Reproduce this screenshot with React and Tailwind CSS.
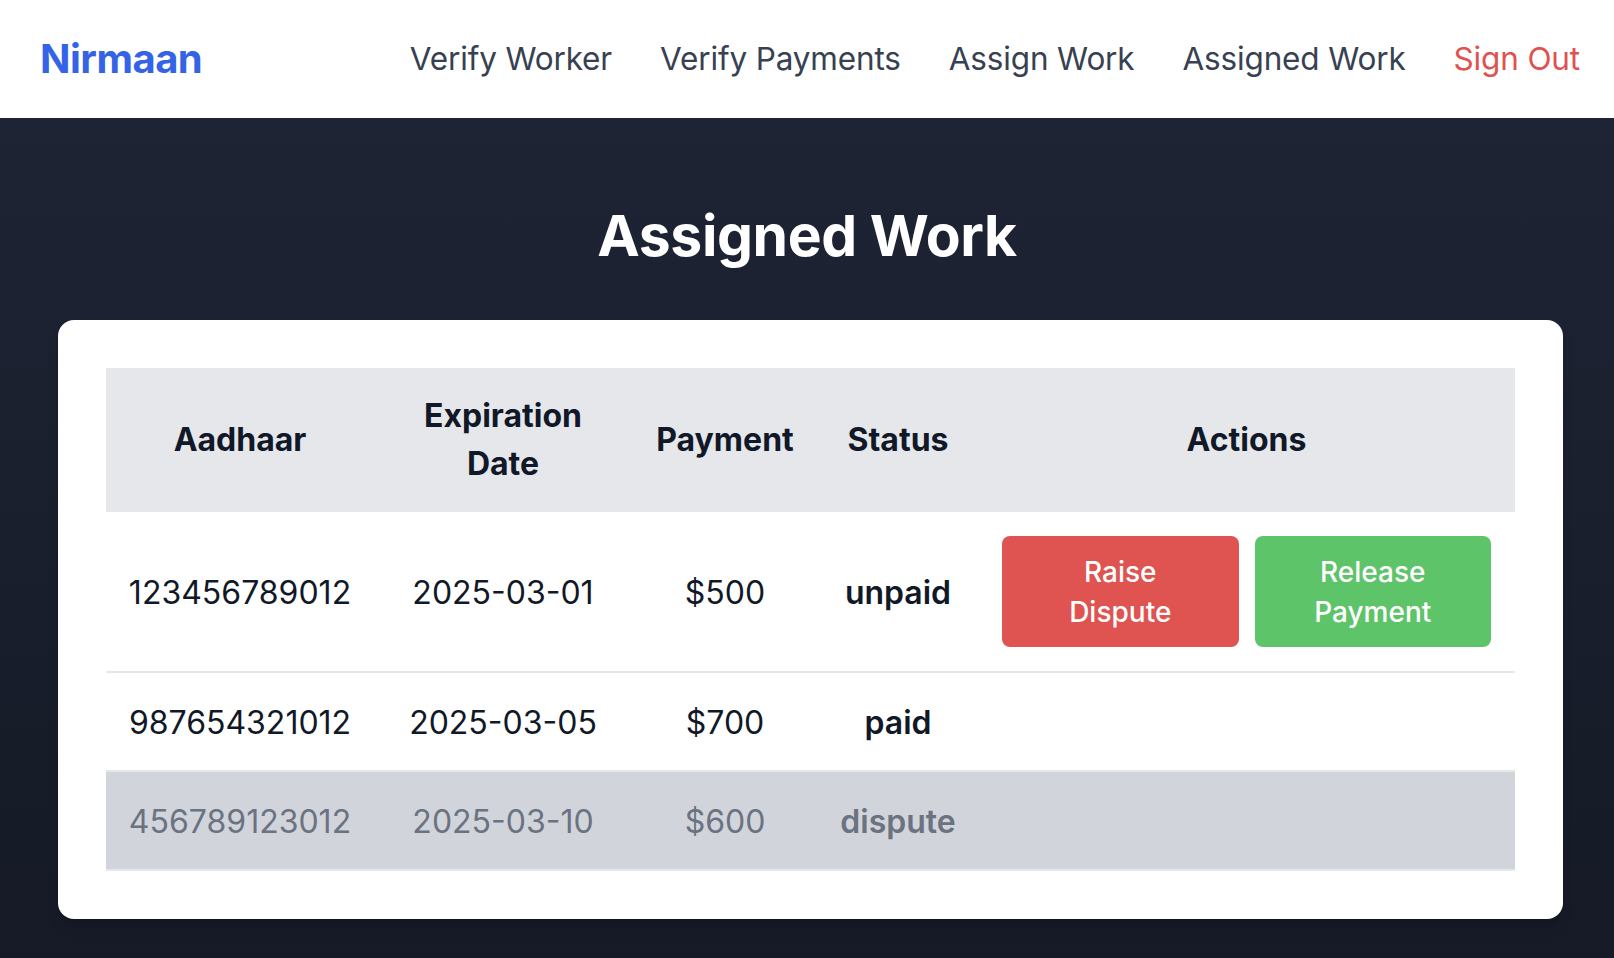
import React from "react";

const rows = [
  { aadhaar: "123456789012", date: "2025-03-01", payment: "$500", status: "unpaid" },
  { aadhaar: "987654321012", date: "2025-03-05", payment: "$700", status: "paid" },
  { aadhaar: "456789123012", date: "2025-03-10", payment: "$600", status: "dispute" },
];

function Navbar() {
  return (
    <header className="h-[118px] bg-white flex items-center justify-between pl-[40px] pr-[34px]">
      <span className="text-[40px] font-bold text-[#3563e6] tracking-[-0.5px]">Nirmaan</span>
      <nav className="flex items-center gap-[48px] text-[31.5px] tracking-[-0.15px] text-[#374151]">
        <a>Verify Worker</a>
        <a>Verify Payments</a>
        <a>Assign Work</a>
        <a>Assigned Work</a>
        <a className="text-[#e0524f]">Sign Out</a>
      </nav>
    </header>
  );
}

function WorkTable() {
  return (
    <table className="w-full table-fixed border-collapse text-center">
      <colgroup>
        <col className="w-[268px]" />
        <col className="w-[258px]" />
        <col className="w-[186px]" />
        <col className="w-[160px]" />
        <col />
      </colgroup>
      <thead>
        <tr className="bg-[#e5e7eb] text-[#111827] text-[32px] leading-[48px] font-bold">
          <th className="px-[24px] py-[24px]">Aadhaar</th>
          <th className="px-[24px] py-[24px]">Expiration Date</th>
          <th className="px-[12px] py-[24px]">Payment</th>
          <th className="px-[12px] py-[24px]">Status</th>
          <th className="px-[24px] py-[24px]">Actions</th>
        </tr>
      </thead>
      <tbody className="text-[32px] leading-[48px]">
        {rows.map((r) => {
          const disputed = r.status === "dispute";
          return (
            <tr
              key={r.aadhaar}
              className={
                "border-b-2 border-[#e5e7eb] " +
                (disputed ? "bg-[#d1d5db] text-[#6b7280]" : "text-[#111827]")
              }
            >
              <td className="px-[12px] pt-[26px] pb-[23px]">{r.aadhaar}</td>
              <td className="px-[12px] pt-[26px] pb-[23px]">{r.date}</td>
              <td className="px-[12px] pt-[26px] pb-[23px]">{r.payment}</td>
              <td className="px-[12px] pt-[26px] pb-[23px] font-semibold">{r.status}</td>
              <td className="px-[24px] py-[24px]">
                {r.status === "unpaid" && (
                  <div className="flex gap-[16px]">
                    <button className="flex-1 h-[111px] rounded-[8px] bg-[#df5350] text-white text-[28px] leading-[40px] font-medium">
                      Raise
                      <br />
                      Dispute
                    </button>
                    <button className="flex-1 h-[111px] rounded-[8px] bg-[#5ec46a] text-white text-[28px] leading-[40px] font-medium">
                      Release
                      <br />
                      Payment
                    </button>
                  </div>
                )}
              </td>
            </tr>
          );
        })}
      </tbody>
    </table>
  );
}

export default function App() {
  return (
    <div className="min-h-screen font-['Inter',sans-serif]">
      <Navbar />
      <main className="min-h-[840px] bg-linear-to-b from-[#1e2434] to-[#151a26] pt-[82px] pb-[40px]">
        <h1 className="text-center text-white text-[57px] leading-[72px] font-bold tracking-[-0.4px] mb-[48px]">
          Assigned Work
        </h1>
        <div className="ml-[58px] w-[1505px] bg-white rounded-[16px] p-[48px] shadow-lg">
          <WorkTable />
        </div>
      </main>
    </div>
  );
}
